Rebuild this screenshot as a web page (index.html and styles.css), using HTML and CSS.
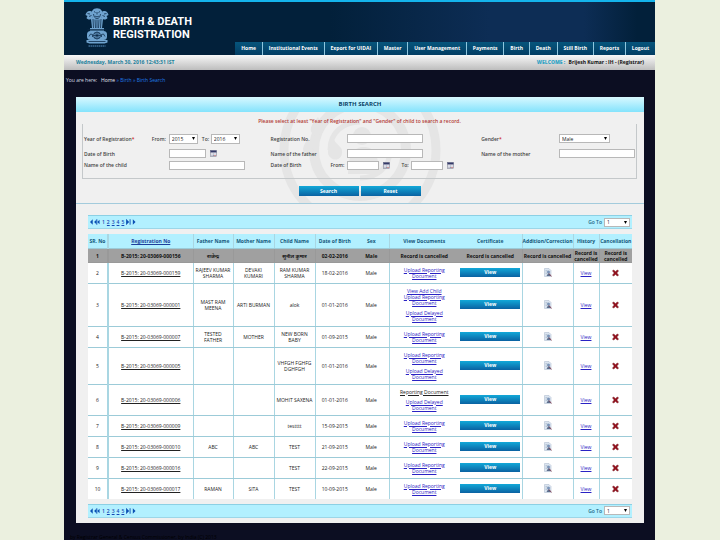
FILE: index.html
```html
<!DOCTYPE html>
<html lang="en">
<head>
  <meta charset="UTF-8" />
  <meta name="viewport" content="width=device-width, initial-scale=1.0"/>
  <title>Birth Search</title>
  <link rel="stylesheet" href="styles.css">
</head>
<body>

  <!-- Shared icons -->
  <svg class="sprite" aria-hidden="true">
    <symbol id="calendar" viewBox="0 0 14 14">
      <rect x="1" y="1" width="12" height="12" fill="#f4f4fa" stroke="#666a80"/>
      <rect x="1" y="1" width="12" height="4" fill="#343a68"/>
      <path d="M3 7h2v2H3zM6 7h2v2H6zM9 7h2v2H9zM3 10h2v2H3zM6 10h2v2H6z" fill="#9298ac"/>
      <path d="M9 10h2v2H9z" fill="#a33"/>
    </symbol>
    <symbol id="edit" viewBox="0 0 16 18">
      <path d="M1 1h9l4 4v12H1z" fill="#dbe5f1" stroke="#a4b4c8"/>
      <path d="M3 5h4M3 8h3M3 11h3" stroke="#9ab" />
      <circle cx="9" cy="8" r="3" fill="#7a94b8"/>
      <path d="M5 16l3-5h3l3 5z" fill="#5d6e8c"/>
      <path d="M10 11l5 6" stroke="#834" stroke-width="1.5"/>
    </symbol>
    <symbol id="cross" viewBox="0 0 16 16">
      <path d="M1 3l3-2 4 4 4-4 3 2-4 5 4 5-3 2-4-4-4 4-3-2 4-5z" fill="#94101c" stroke="#6d0a12"/>
    </symbol>
    <symbol id="first" viewBox="0 0 22 12">
      <path d="M6 0v12L0 6zM14 1v10L9 6zM21 1v10l-5-5z" fill="#0a50b4"/>
      <path d="M15 0v12" stroke="#0a50b4" stroke-width="2"/>
    </symbol>
    <symbol id="last" viewBox="0 0 22 12">
      <path d="M2 1v10l5-5zM15 0v12l6-6z" fill="#0a50b4"/>
      <path d="M1 0v12M9 0v12" stroke="#0a50b4" stroke-width="2"/>
    </symbol>
  </svg>

  <div class="page">
    <header class="header">
      <div class="brand">
        <svg class="emblem" viewBox="0 0 48 84" aria-hidden="true">
          <g fill="#6fa3cf">
            <path d="M15 7c3-6 15-6 18 0 3 2 4 7 2 10l-3 5H16l-3-5c-2-3-1-8 2-10z"/>
            <path d="M13 9C7 6 2 10 1 16l4 2-2 4c2 3 6 4 9 2l2 18h-4v5h28v-5h-4l2-18c3 2 7 1 9-2l-2-4 4-2C46 10 41 6 35 9l-3 13H16z"/>
            <rect x="4" y="48" width="40" height="18" rx="7"/>
            <path d="M3 66h42v5l-6 2H9l-6-2z"/>
          </g>
          <g fill="none" stroke="#0a2744" stroke-width="1.5">
            <path d="M18 9l3 2M27 11l3-2M24 10v5M20 18c2 2 6 2 8 0M17 14c1 6 3 9 7 9s6-3 7-9"/>
            <path d="M16 24l1 18M20 25l1 17M24 25v17M28 25l-1 17M32 24l-1 18M5 13l5 1M43 13l-5 1M8 19l5-2M40 19l-5-2M5 45h38"/>
            <circle cx="24" cy="57" r="7"/>
            <path d="M24 50v14M17 57h14M19 52l10 10M29 52L19 62M8 59l3-5 4 1v5M40 59l-3-5-4 1v5M7 69h34"/>
          </g>
          <path d="M7 78h34" stroke="#3c6b94" stroke-width="3" stroke-dasharray="3 1"/>
        </svg>
        <h1>BIRTH &amp; DEATH<br>REGISTRATION</h1>
      </div>
      <nav class="main-nav">
        <a href="#">Home</a>
        <a href="#">Institutional Events</a>
        <a href="#">Export for UIDAI</a>
        <a href="#">Master</a>
        <a href="#">User Management</a>
        <a href="#">Payments</a>
        <a href="#">Birth</a>
        <a href="#">Death</a>
        <a href="#">Still Birth</a>
        <a href="#">Reports</a>
        <a href="#">Logout</a>
      </nav>
    </header>

    <div class="welcome-bar">
      <span class="date">Wednesday, March 30, 2016 12:43:31 IST</span>
      <span class="user"><b>WELCOME :</b> Brijesh Kumar : IH - (Registrar)</span>
    </div>

    <div class="breadcrumb">You are here: &nbsp; <a href="#" class="home">Home</a> <a href="#">» Birth</a> <a href="#">» Birth Search</a></div>

    <main class="panel">
      <h2 class="panel-title">BIRTH SEARCH</h2>

      <form class="search">
        <svg class="watermark" viewBox="0 0 180 91" aria-hidden="true">
          <g fill="none" stroke="#e5e5e5">
            <circle cx="90" cy="38" r="76" stroke-width="9"/>
            <circle cx="90" cy="38" r="46" stroke-width="10"/>
            <path d="M60 38c0-18 14-28 30-28M120 38c0 18-14 28-30 28" stroke-width="5"/>
          </g>
          <g fill="#e5e5e5">
            <path d="M48 5c-8 9-9 13-5 17s11 0 10-6c0-4-3-6-5-11zM64 28c-7 9-8 14-3 18s12 0 11-7c0-4-5-6-8-11zM38 27c-6 8-6 12-3 15s9 0 8-5c0-4-3-6-5-10z"/>
            <circle cx="92" cy="24" r="9"/>
            <path d="M78 62c0-20 6-27 16-27s15 8 15 27z"/>
          </g>
        </svg>

        <p class="notice">Please select at least "Year of Registration" and "Gender" of child to search a record.</p>

        <div class="fields">
          <div class="label"><span>Year of Registration<i>*</i></span><label for="yearFrom">From:</label></div>
          <div class="control years">
            <select id="yearFrom"><option>2015</option></select>
            <label for="yearTo">To:</label>
            <select id="yearTo"><option>2016</option></select>
          </div>
          <label class="label" for="regNo">Registration No.</label>
          <div class="control"><input type="text" id="regNo" class="wide"></div>
          <label class="label" for="gender"><span>Gender<i>*</i></span></label>
          <div class="control"><select id="gender" class="gender"><option>Male</option></select></div>

          <label class="label" for="dob">Date of Birth</label>
          <div class="control"><input type="text" id="dob" class="date-input"><svg class="cal"><use href="#calendar"/></svg></div>
          <label class="label" for="father">Name of the father</label>
          <div class="control"><input type="text" id="father" class="wide"></div>
          <label class="label" for="mother">Name of the mother</label>
          <div class="control"><input type="text" id="mother" class="wide"></div>

          <label class="label" for="child">Name of the child</label>
          <div class="control"><input type="text" id="child" class="wide"></div>
          <div class="label"><span>Date of Birth</span><label for="dobFrom">From:</label></div>
          <div class="control range">
            <input type="text" id="dobFrom"><svg class="cal"><use href="#calendar"/></svg>
            <label for="dobTo">To:</label>
            <input type="text" id="dobTo"><svg class="cal"><use href="#calendar"/></svg>
          </div>
        </div>

        <div class="actions">
          <button type="button" class="btn">Search</button>
          <button type="reset" class="btn">Reset</button>
        </div>
      </form>

      <div class="results">
        <div class="pager">
          <div class="pages">
            <svg><use href="#first"/></svg>
            <span>1</span> <a href="#">2</a> <a href="#">3</a> <a href="#">4</a> <a href="#">5</a>
            <svg><use href="#last"/></svg>
          </div>
          <label for="goTop">Go To</label>
          <select id="goTop"><option>1</option></select>
        </div>

        <table class="records">
          <colgroup>
            <col class="c-sr"><col class="c-reg"><col class="c-father"><col class="c-mother"><col class="c-child"><col class="c-dob">
            <col class="c-sex"><col class="c-docs"><col class="c-cert"><col class="c-add"><col class="c-hist"><col class="c-cancel">
          </colgroup>
          <thead>
            <tr>
              <th>SR. No</th><th><a href="#">Registration No</a></th><th>Father Name</th><th>Mother Name</th><th>Child Name</th><th>Date of Birth</th>
              <th>Sex</th><th>View Documents</th><th>Certificate</th><th>Addition/Correction</th><th>History</th><th>Cancellation</th>
            </tr>
          </thead>
          <tbody>
            <tr class="cancelled">
              <td>1</td><td>B-2015: 20-03069-000156</td><td>राजेन्द्र</td><td></td><td>सुनील कुमार</td><td>02-02-2016</td><td>Male</td>
              <td>Record is cancelled</td><td>Record is cancelled</td><td>Record is cancelled</td><td>Record is cancelled</td><td>Record is cancelled</td>
            </tr>
            <tr>
              <td>2</td><td><a href="#" class="reg">B-2015: 20-03069-000159</a></td><td>RAJEEV KUMAR SHARMA</td><td>DEVAKI<br>KUMARI</td><td>RAM KUMAR SHARMA</td><td>18-02-2016</td><td>Male</td>
              <td><a href="#">Upload Reporting Document</a></td>
              <td><button type="button" class="btn">View</button></td><td><svg class="edit"><use href="#edit"/></svg></td><td><a href="#">View</a></td><td><svg class="cross"><use href="#cross"/></svg></td>
            </tr>
            <tr>
              <td>3</td><td><a href="#" class="reg">B-2015: 20-03069-000001</a></td><td>MAST RAM MEENA</td><td>ARTI BURMAN</td><td>alok</td><td>01-01-2016</td><td>Male</td>
              <td><a href="#">View Add Child</a><br><a href="#">Upload Reporting Document</a><p><a href="#">Upload Delayed Document</a></p></td>
              <td><button type="button" class="btn">View</button></td><td><svg class="edit"><use href="#edit"/></svg></td><td><a href="#">View</a></td><td><svg class="cross"><use href="#cross"/></svg></td>
            </tr>
            <tr>
              <td>4</td><td><a href="#" class="reg">B-2015: 20-03069-000007</a></td><td>TESTED<br>FATHER</td><td>MOTHER</td><td>NEW BORN BABY</td><td>01-09-2015</td><td>Male</td>
              <td><a href="#">Upload Reporting Document</a></td>
              <td><button type="button" class="btn">View</button></td><td><svg class="edit"><use href="#edit"/></svg></td><td><a href="#">View</a></td><td><svg class="cross"><use href="#cross"/></svg></td>
            </tr>
            <tr>
              <td>5</td><td><a href="#" class="reg">B-2015: 20-03069-000005</a></td><td></td><td></td><td>VHFGH FGHFG DGHFGH</td><td>01-01-2016</td><td>Male</td>
              <td><a href="#">Upload Reporting Document</a><p><a href="#">Upload Delayed Document</a></p></td>
              <td><button type="button" class="btn">View</button></td><td><svg class="edit"><use href="#edit"/></svg></td><td><a href="#">View</a></td><td><svg class="cross"><use href="#cross"/></svg></td>
            </tr>
            <tr>
              <td>6</td><td><a href="#" class="reg">B-2015: 20-03069-000006</a></td><td></td><td></td><td>MOHIT SAXENA</td><td>01-01-2016</td><td>Male</td>
              <td><a href="#" class="reg">Reporting Document</a><p><a href="#">Upload Delayed Document</a></p></td>
              <td><button type="button" class="btn">View</button></td><td><svg class="edit"><use href="#edit"/></svg></td><td><a href="#">View</a></td><td><svg class="cross"><use href="#cross"/></svg></td>
            </tr>
            <tr>
              <td>7</td><td><a href="#" class="reg">B-2015: 20-03069-000009</a></td><td></td><td></td><td>testttt</td><td>15-09-2015</td><td>Male</td>
              <td><a href="#">Upload Reporting Document</a></td>
              <td><button type="button" class="btn">View</button></td><td><svg class="edit"><use href="#edit"/></svg></td><td><a href="#">View</a></td><td><svg class="cross"><use href="#cross"/></svg></td>
            </tr>
            <tr>
              <td>8</td><td><a href="#" class="reg">B-2015: 20-03069-000010</a></td><td>ABC</td><td>ABC</td><td>TEST</td><td>21-09-2015</td><td>Male</td>
              <td><a href="#">Upload Reporting Document</a></td>
              <td><button type="button" class="btn">View</button></td><td><svg class="edit"><use href="#edit"/></svg></td><td><a href="#">View</a></td><td><svg class="cross"><use href="#cross"/></svg></td>
            </tr>
            <tr>
              <td>9</td><td><a href="#" class="reg">B-2015: 20-03069-000016</a></td><td></td><td></td><td>TEST</td><td>22-09-2015</td><td>Male</td>
              <td><a href="#">Upload Reporting Document</a></td>
              <td><button type="button" class="btn">View</button></td><td><svg class="edit"><use href="#edit"/></svg></td><td><a href="#">View</a></td><td><svg class="cross"><use href="#cross"/></svg></td>
            </tr>
            <tr>
              <td>10</td><td><a href="#" class="reg">B-2015: 20-03069-000017</a></td><td>RAMAN</td><td>SITA</td><td>TEST</td><td>10-09-2015</td><td>Male</td>
              <td><a href="#">Upload Reporting Document</a></td>
              <td><button type="button" class="btn">View</button></td><td><svg class="edit"><use href="#edit"/></svg></td><td><a href="#">View</a></td><td><svg class="cross"><use href="#cross"/></svg></td>
            </tr>
          </tbody>
        </table>

        <div class="pager">
          <div class="pages">
            <svg><use href="#first"/></svg>
            <span>1</span> <a href="#">2</a> <a href="#">3</a> <a href="#">4</a> <a href="#">5</a>
            <svg><use href="#last"/></svg>
          </div>
          <label for="goBottom">Go To</label>
          <select id="goBottom"><option>1</option></select>
        </div>
      </div>
    </main>

    <footer class="footer">by Registrar General &amp; Census Commissioner, by India (C) 2013</footer>
  </div>

</body>
</html>
```

FILE: styles.css
```css
* {
  box-sizing: border-box;
  margin: 0;
  padding: 0;
}

body {
  font-family: "Open Sans", "Noto Sans", sans-serif;
  font-size: 5px;
  line-height: 6px;
  color: #222;
  background: #ebf0df;
  padding: 0 65px 0 64px;
}

.sprite {
  display: none;
}

.page {
  min-height: 100vh;
  background: #0c0e22;
}

/* Header */
.header {
  display: flex;
  flex-direction: column;
  justify-content: space-between;
  height: 55px;
  border-top: 2px solid #14b4ec;
  background: linear-gradient(90deg, #02203a 0%, #02203a 45%, #0d2d55 72%, #0d2d55 88%, #02203a 97%);
}

.brand {
  display: flex;
  gap: 4px;
  height: 40px;
  padding: 5px 0 0 21px;
}

.emblem {
  flex: none;
  width: 24px;
  height: 42px;
}

.brand h1 {
  font-family: Roboto, sans-serif;
  font-size: 11px;
  line-height: 13px;
  font-weight: 700;
  color: #fff;
  white-space: nowrap;
  padding-top: 8px;
}

.main-nav {
  display: flex;
  align-self: flex-end;
  min-width: 71%;
  height: 13px;
  background: linear-gradient(#06557c, #033d63);
}

.main-nav a {
  flex: 1 0 auto;
  padding: 0 5px;
  color: #fff;
  font-weight: 700;
  line-height: 13px;
  text-align: center;
  text-decoration: none;
  white-space: nowrap;
}

.main-nav a + a {
  border-left: 1px solid #8fc6de;
}

.welcome-bar {
  display: flex;
  justify-content: space-between;
  padding: 0 11px 0 12px;
  height: 15px;
  line-height: 15px;
  font-weight: 700;
  background: linear-gradient(#f8f8f8, #bdbdbd);
}

.date {
  color: #227f9b;
}

.user {
  color: #111;
}

.user b {
  margin-right: 2px;
  color: #35a3c4;
}

.breadcrumb {
  height: 27px;
  padding: 7px 2px 0;
  color: #d8dce6;
}

.breadcrumb a {
  color: #1f7be6;
  text-decoration: none;
}

.breadcrumb .home {
  color: #e8ecf4;
}

/* Panel */
.panel {
  margin: 0 11px 0 12px;
  background: #f0f0f0;
}

.panel-title {
  height: 15px;
  line-height: 15px;
  font-size: 6px;
  text-align: center;
  color: #0b4468;
  background: linear-gradient(#d8f8ff, #84e3fc);
}

.search {
  position: relative;
  padding: 0 7px 7px 6px;
  border-bottom: 1px solid #a3cbdc;
}

.watermark {
  position: absolute;
  top: 0;
  left: 50%;
  width: 180px;
  height: 91px;
  margin-left: -90px;
}

.notice {
  position: relative;
  padding: 6px 0 0;
  text-align: center;
  font-weight: 600;
  color: #b23a35;
}

.fields {
  position: relative;
  display: grid;
  grid-template-columns: 85fr 102fr 77fr 134fr 78fr 75fr;
  grid-template-rows: 19px 11px 12px;
  align-items: center;
  padding: 5px 1px 7px;
  border: 1px solid #c4c8ca;
  border-top: 0;
  font-weight: 600;
  color: #444;
}

.label {
  display: flex;
  justify-content: space-between;
  padding-right: 3px;
}

.label i {
  color: #c22;
  font-style: normal;
}

.control {
  display: flex;
  align-items: center;
}

input,
select {
  height: 9px;
  border: 1px solid #b8b8b8;
  background: #fff;
  font-family: inherit;
  font-size: 5px;
  color: #222;
}

select {
  appearance: none;
  padding: 0 2px;
  background: #fff url("data:image/svg+xml,%3Csvg xmlns='http://www.w3.org/2000/svg' viewBox='0 0 4 4'%3E%3Cpath d='M0 0h4L2 4z'/%3E%3C/svg%3E") no-repeat right 2px center / 3px 3px;
}

.wide {
  width: 76px;
}

.years select {
  width: 29px;
  height: 10px;
}

.years label {
  width: 13px;
  padding-left: 4px;
}

.gender {
  width: 51px;
}

.date-input {
  width: 37px;
}

.range input {
  width: 32px;
}

.range label {
  padding: 0 2px 0 11px;
}

.cal {
  width: 7px;
  height: 7px;
  margin-left: 4px;
}

.actions {
  position: relative;
  display: flex;
  justify-content: center;
  gap: 2px;
  padding-top: 7px;
}

.btn {
  width: 60px;
  height: 10px;
  border: 0;
  background: linear-gradient(#12a8d8, #0a62a2);
  color: #fff;
  font-family: inherit;
  font-size: 5px;
  line-height: 10px;
  font-weight: 700;
  cursor: pointer;
}

/* Results */
.results {
  padding: 11px 12px 5px;
}

.pager {
  display: flex;
  align-items: center;
  gap: 2px;
  height: 14px;
  padding: 0 2px;
  border-top: 1px solid #8cd0e4;
  border-bottom: 1px solid #9cd6e8;
  background: #b2f0ff;
  font-weight: 600;
  color: #1b6484;
}

.pages {
  display: flex;
  align-items: center;
  gap: 2px;
  margin-right: auto;
  color: #1446b4;
}

.pages a {
  color: #1446b4;
}

.pages svg {
  width: 10px;
  height: 6px;
}

.pager select {
  width: 26px;
}

.records {
  width: 100%;
  margin: 5px 0;
  table-layout: fixed;
  border-collapse: collapse;
  background: #fff;
  text-align: center;
}

.c-sr { width: 20px; }
.c-reg { width: 85px; }
.c-father { width: 40px; }
.c-mother { width: 41px; }
.c-child { width: 41px; }
.c-dob { width: 39px; }
.c-sex { width: 35px; }
.c-docs { width: 70px; }
.c-cert { width: 63px; }
.c-add { width: 51px; }
.c-hist { width: 26px; }
.c-cancel { width: 33px; }

.records td,
.records th {
  border-right: 1px solid #a9d6e2;
  border-bottom: 1px solid #9ccbd8;
  vertical-align: middle;
}

.records td {
  padding: 4px 1px;
}

.records th {
  height: 14px;
  background: #b2f0ff;
  color: #12587c;
  white-space: nowrap;
}

.records th:first-child,
.records td:first-child {
  border-right: 2px solid #a9d6e2;
}

.records th:nth-child(6),
.records td:nth-child(6),
.records th:nth-child(8),
.records td:nth-child(8),
.records th:last-child,
.records td:last-child {
  border-right: 0;
}

.records th a {
  color: #1d3f9c;
}

.records td a {
  color: #2a22c4;
}

.records td a.reg {
  color: #222;
  white-space: nowrap;
}

.records td p {
  margin-top: 4px;
}

.records td:nth-child(8) {
  padding: 4px 10px;
}

.records tr:last-child td {
  border-bottom: 0;
}

.records .cancelled td {
  padding: 1px 0 0;
  border-color: #999;
  background: #a0a0a0;
  color: #111;
  font-weight: 700;
}

.records .btn,
.records svg {
  display: block;
  margin: 0 auto;
}

.records .btn {
  height: 9px;
  line-height: 9px;
}

.edit {
  width: 8px;
  height: 9px;
}

.cross {
  width: 7px;
  height: 8px;
}

.footer {
  padding: 11px 6px 0;
  color: #000;
}
```
